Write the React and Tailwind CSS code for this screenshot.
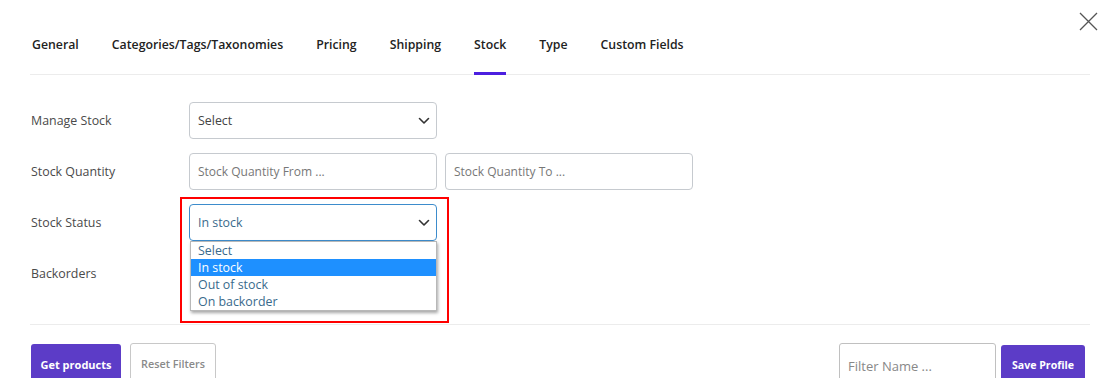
import React from "react";

const tabs = [
  "General",
  "Categories/Tags/Taxonomies",
  "Pricing",
  "Shipping",
  "Stock",
  "Type",
  "Custom Fields",
];

function Chevron() {
  return (
    <svg width="12" height="8" viewBox="0 0 12 8" className="shrink-0">
      <path d="M1.5 1.5 L6 6 L10.5 1.5" fill="none" stroke="#333" strokeWidth="1.6" strokeLinecap="round" strokeLinejoin="round" />
    </svg>
  );
}

function Select({ value, focused }) {
  return (
    <div
      className={`w-[248px] h-[37px] rounded-[4px] border ${
        focused ? "border-[#3d8ccc] text-[#3a6a8c]" : "border-[#c6cacf] text-[#444]"
      } flex items-center justify-between pl-[8px] pr-[6px] text-[12.4px] bg-white`}
    >
      <span className="pt-[2px]">{value}</span>
      <Chevron />
    </div>
  );
}

function Input({ placeholder, w = "w-[248px]" }) {
  return (
    <div className={`${w} h-[37px] rounded-[4px] border border-[#c6cacf] flex items-center pl-[8px] pt-[1px] text-[12px] text-[#777] bg-white`}>
      {placeholder}
    </div>
  );
}

function Row({ label, children }) {
  return (
    <div className="flex items-center h-[37px]">
      <div className="w-[159px] pl-[1px] pt-[2px] text-[12.4px] text-[#4a4a4a]">{label}</div>
      {children}
    </div>
  );
}

export default function App() {
  return (
    <div className="relative w-[1119px] h-[378px] overflow-hidden bg-white font-['Open_Sans',sans-serif]">
      <button className="absolute left-[1078px] top-[11px] w-[21px] h-[21px]">
        <svg width="21" height="21" viewBox="0 0 21 21">
          <path d="M2 2 L19 19 M19 2 L2 19" stroke="#555" strokeWidth="1.3" />
        </svg>
      </button>

      <div className="pl-[30px] pr-[29px] pt-[36px]">
        <div className="flex gap-[33px] border-b border-[#ececec] pl-[2px]">
          {tabs.map((t) => (
            <div
              key={t}
              className={`-mb-px pb-[18px] border-b-[3px] text-[12.3px] leading-[18px] font-semibold text-[#222] ${
                t === "Stock" ? "border-[#4c1fe0]" : "border-transparent"
              }`}
            >
              {t}
            </div>
          ))}
        </div>

        <div className="flex flex-col gap-[14px] pt-[27px]">
          <Row label="Manage Stock">
            <Select value="Select" />
          </Row>
          <Row label="Stock Quantity">
            <div className="flex gap-[8px]">
              <Input placeholder="Stock Quantity From ..." />
              <Input placeholder="Stock Quantity To ..." />
            </div>
          </Row>
          <Row label="Stock Status">
            <div className="relative">
              <Select value="In stock" focused />
              <div className="absolute left-[1px] top-[37px] w-[247px] bg-white border border-[#b8b8b8] shadow-[1px_2px_3px_rgba(0,0,0,0.35)] text-[12.4px] leading-[17px] text-[#3a6a8c] z-10">
                <div className="pl-[7px]">Select</div>
                <div className="pl-[7px] bg-[#1e90ff] text-white">In stock</div>
                <div className="pl-[7px]">Out of stock</div>
                <div className="pl-[7px]">On backorder</div>
              </div>
              <div className="absolute left-[-9px] top-[-7px] w-[269px] h-[126px] border-2 border-[#ff0000] z-20 pointer-events-none" />
            </div>
          </Row>
          <Row label="Backorders">
            <div />
          </Row>
        </div>

        <div className="mt-[32px] border-t border-[#ececec]" />

        <div className="flex justify-between items-start pt-[18px] pl-[1px] pr-[5px]">
          <div className="flex gap-[9px] items-start">
            <button className="mt-[1px] w-[90px] h-[42px] rounded-[3px] bg-[#5c3cc7] text-white text-[11px] font-bold">
              Get products
            </button>
            <button className="w-[86px] h-[42px] rounded-[3px] border border-[#c8c8c8] text-[#8a8a8a] text-[10.8px] font-semibold bg-white">
              Reset Filters
            </button>
          </div>
          <div className="flex gap-[5px] items-start">
            <div className="w-[157px] h-[44px] rounded-[3px] border border-[#c0c0c0] flex items-center pl-[8px] pt-[3px] text-[13px] text-[#888]">
              Filter Name ...
            </div>
            <button className="mt-[2px] w-[84px] h-[42px] rounded-[3px] bg-[#5c3cc7] text-white text-[10.6px] font-bold">
              Save Profile
            </button>
          </div>
        </div>
      </div>
    </div>
  );
}
